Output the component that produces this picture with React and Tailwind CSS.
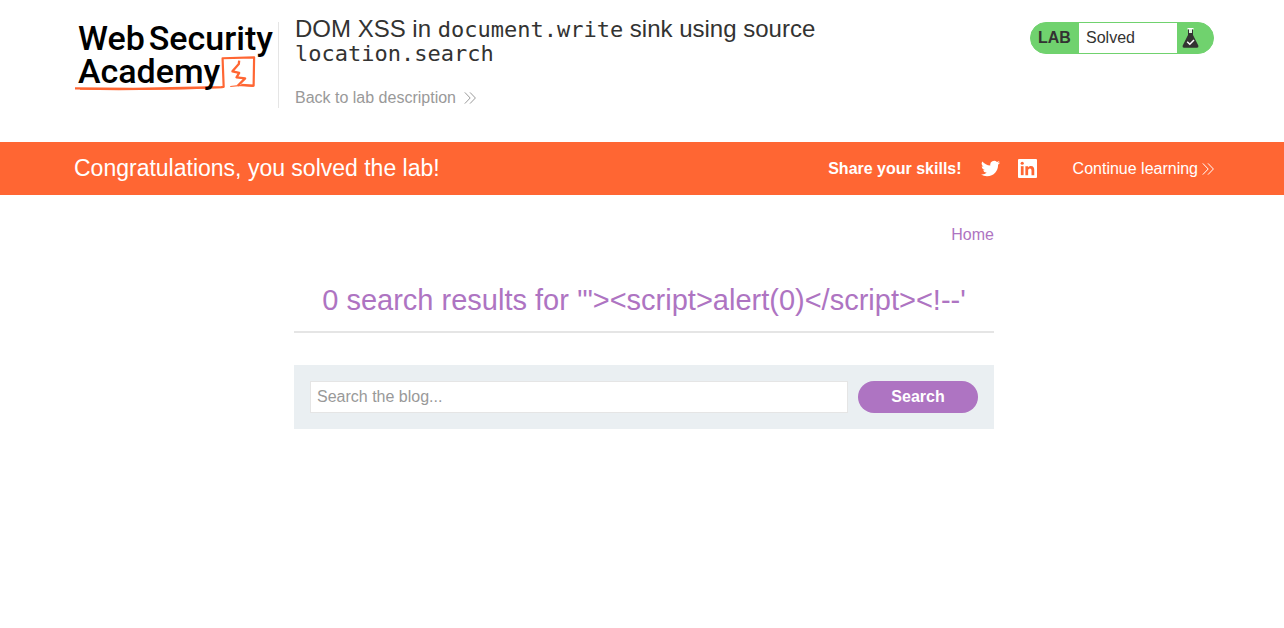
function Chevrons({ className }) {
  return (
    <svg viewBox="0 0 12 12" className={className} fill="none" stroke="currentColor" strokeWidth="1" aria-hidden="true">
      <path d="M0.8 0.4 L6.2 6 L0.8 11.6 M6 0.4 L11.4 6 L6 11.6" />
    </svg>
  );
}

function Logo() {
  return (
    <a href="#academy" className="relative block h-[86px] w-[205px] shrink-0 border-r border-[#e5e5e5] font-['Roboto',sans-serif] text-[34px] leading-[33px] font-medium whitespace-nowrap text-black">
      <span className="flex gap-1 pl-1">
        <span>Web</span>
        <span>Security</span>
      </span>
      <svg viewBox="0 0 205 86" className="absolute inset-0 h-full w-full" fill="none" stroke="#ff6633" strokeLinejoin="round" aria-hidden="true">
        <path d="M1 66.4 L60 67 L148 65.2 L150.4 65 L149.3 36.2 L181 35.3 L180.5 63.8 L168 63" strokeWidth="2.2" />
        <path d="M6 67.2 L45 67.8 L110 67 L150 65.6" strokeWidth="1.2" />
        <path d="M157 64.6 L168 63.4 L180.5 64.6" strokeWidth="1.2" />
        <path d="M166 38.5 L165.6 42 L159.2 49.4 L166 51 L163.3 55.4 L172 56.4 L164.5 63.8" strokeWidth="2.3" />
      </svg>
      <span className="relative block pl-1">Academy</span>
    </a>
  );
}

function Flask() {
  return (
    <svg viewBox="0 0 18 22" className="h-[22px] w-[18px]" aria-hidden="true">
      <rect x="5.5" y="1" width="6" height="1.5" fill="#ffffff" />
      <path d="M6.5 2 H10.5 V7 H6.5 Z" fill="#dff5df" />
      <path d="M6 2.5 H7 V6 H10 V2.5 H11 V8 L16.4 18.8 Q16.8 20.8 15 20.8 H2 Q0.2 20.8 0.6 18.8 L6 8 Z" fill="#333332" />
      <path d="M5.2 14.8 L7.8 17.3 L12 13" fill="none" stroke="#ffffff" strokeWidth="1.5" />
    </svg>
  );
}

export default function App() {
  return (
    <div className="bg-white font-['Liberation_Sans',Arial,sans-serif] text-base text-[#333332]">
      <header className="mx-auto flex max-w-[1144px] items-start pt-[22px] pb-8 pl-1">
        <Logo />
        <div className="-mt-[5px] flex-1 pl-4">
          <h1 className="max-w-[560px] text-2xl leading-6">
            DOM XSS in <code className="font-['DejaVu_Sans_Mono',monospace] text-[22px] leading-4">document.write</code> sink using source{" "}
            <code className="font-['DejaVu_Sans_Mono',monospace] text-[22px] leading-4">location.search</code>
          </h1>
          <a href="#lab" className="mt-[21px] flex w-fit items-center gap-2 text-[#999999]">
            Back to lab description
            <Chevrons className="h-3 w-3" />
          </a>
        </div>
        <div className="flex h-8 w-[184px] items-stretch overflow-hidden rounded-full border border-[#70d26e] bg-[#70d26e]">
          <span className="flex w-12 items-center pl-[7px] font-bold">LAB</span>
          <p className="flex flex-1 items-center bg-white pl-[7px]">Solved</p>
          <span className="flex w-9 items-center pl-[5px]">
            <Flask />
          </span>
        </div>
      </header>

      <section className="bg-[#ff6633] text-white">
        <div className="mx-auto flex h-[53px] max-w-[1144px] items-center pl-1">
          <h2 className="flex-1 text-[23px]">Congratulations, you solved the lab!</h2>
          <span className="font-bold">Share your skills!</span>
          <a href="#twitter" aria-label="Twitter" className="ml-[19px]">
            <svg viewBox="0 0 24 24" className="h-[19px] w-[19px]" fill="currentColor" aria-hidden="true">
              <path d="M23.95 4.57a10 10 0 0 1-2.82.77 4.96 4.96 0 0 0 2.16-2.72c-.95.55-2 .95-3.13 1.18a4.92 4.92 0 0 0-8.38 4.48C7.69 8.1 4.07 6.13 1.64 3.16a4.92 4.92 0 0 0 1.52 6.57 4.9 4.9 0 0 1-2.23-.61v.06c0 2.38 1.7 4.37 3.95 4.83a5 5 0 0 1-2.21.08 4.94 4.94 0 0 0 4.6 3.42A9.87 9.87 0 0 1 0 19.54a14 14 0 0 0 7.55 2.21c9.05 0 14-7.5 14-13.98 0-.21 0-.42-.02-.63a9.94 9.94 0 0 0 2.46-2.55z" />
            </svg>
          </a>
          <a href="#linkedin" aria-label="LinkedIn" className="ml-[18px]">
            <svg viewBox="1 1 18 18" className="h-[19px] w-[19px]" aria-hidden="true">
              <rect x="1" y="1" width="18" height="18" rx="1" fill="#ffffff" />
              <g fill="#ff6633">
                <circle cx="5" cy="5" r="1.5" />
                <path d="M3.7 7.8 H6.3 V16.3 H3.7 Z" />
                <path d="M8 7.8 H10.5 V9 C11.1 8.1 12 7.6 13.2 7.6 C15.7 7.6 16.4 9.3 16.4 11.5 V16.3 H13.8 V12.1 C13.8 10.8 13.5 9.9 12.3 9.9 C11.1 9.9 10.6 10.8 10.6 12 V16.3 H8 Z" />
              </g>
            </svg>
          </a>
          <a href="#continue" className="ml-9 flex items-center gap-1">
            Continue learning
            <Chevrons className="h-3 w-3" />
          </a>
        </div>
      </section>

      <main className="mx-auto max-w-[704px] pt-7 pl-1">
        <nav className="text-right">
          <a href="#home" className="text-[#ae74c2]">Home</a>
        </nav>
        <h1 className="mt-8 border-b-2 border-[#e5e5e5] pt-[3px] pb-[13px] text-center text-[29px] leading-9 text-[#ae74c2]">
          {"0 search results for '\"><script>alert(0)</script><!--'"}
        </h1>
        <form className="mt-8 flex gap-[10px] bg-[#eaeff2] p-4" onSubmit={(e) => e.preventDefault()}>
          <input
            type="text"
            aria-label="Search the blog"
            placeholder="Search the blog..."
            className="h-8 min-w-0 flex-1 border border-[#e5e5e5] bg-white px-[6px] outline-none placeholder:text-[#999999]"
          />
          <button type="submit" className="h-8 w-[120px] rounded-full bg-[#ae74c2] font-bold text-white">
            Search
          </button>
        </form>
      </main>
    </div>
  );
}
